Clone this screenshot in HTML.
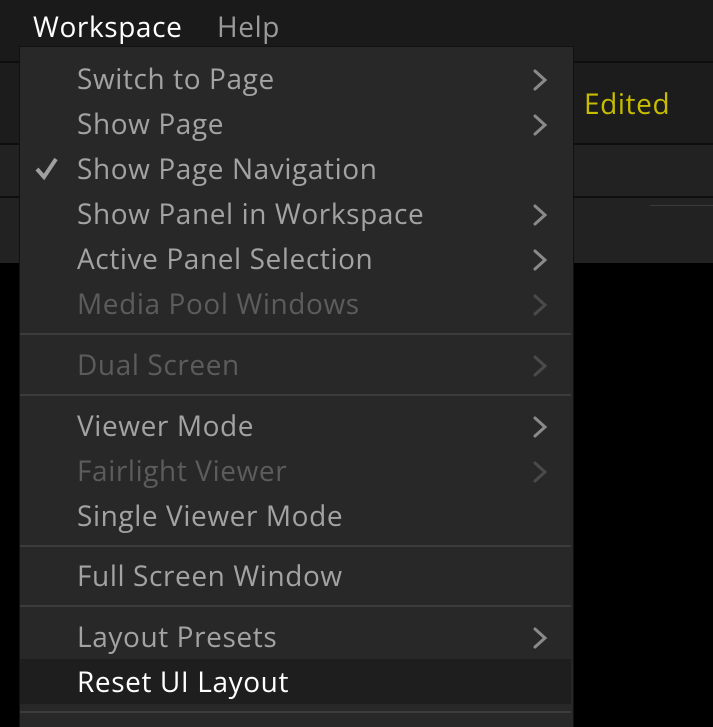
<!DOCTYPE html>
<html><head><style>
html,body{margin:0;padding:0;width:713px;height:726px;overflow:hidden;background:#000;font-family:"Open Sans","Liberation Sans",sans-serif;}
.abs{position:absolute;}
.t{position:absolute;left:77px;font-size:28px;color:#a3a3a3;white-space:nowrap;line-height:30px;letter-spacing:0.6px;}
.d{color:#5c5c5c;}
.sep{position:absolute;left:20px;width:551px;height:2px;background:#3c3c3c;}
</style></head><body>
<div class="abs" style="left:0;top:0;width:713px;height:61px;background:#1a1a1a"></div>
<div class="abs" style="left:0;top:61px;width:713px;height:2px;background:#0e0e0e"></div>
<div class="abs" style="left:0;top:63px;width:713px;height:80px;background:#1c1c1c"></div>
<div class="abs" style="left:0;top:143px;width:713px;height:2px;background:#0e0e0e"></div>
<div class="abs" style="left:0;top:145px;width:713px;height:51px;background:#222"></div>
<div class="abs" style="left:0;top:196px;width:713px;height:2px;background:#0e0e0e"></div>
<div class="abs" style="left:0;top:198px;width:713px;height:65px;background:#222"></div>
<div class="abs" style="left:650px;top:205px;width:63px;height:1px;background:#3a3a3a"></div>
<div class="t" style="left:33px;top:12px;color:#fff">Workspace</div>
<div class="t" style="left:217px;top:12px;color:#9a9a9a">Help</div>
<div class="t" style="left:584px;top:89px;color:#c6bd00">Edited</div>
<div class="abs" style="left:19px;top:46px;width:553px;height:680px;background:#282828;border:1px solid #111;border-bottom:none"></div>
<div class="abs" style="left:20px;top:659px;width:551px;height:45px;background:#1e1e1e"></div>
<svg class="abs" style="left:0;top:0" width="713" height="726">
<g fill="none" stroke="#8a8a8a" stroke-width="3" stroke-linecap="round">
<path d="M535 71l10 9-10 9"/><path d="M535 116l10 9-10 9"/><path d="M535 206l10 9-10 9"/><path d="M535 251l10 9-10 9"/>
<path d="M535 418l10 9-10 9"/><path d="M535 629l10 9-10 9"/>
</g>
<g fill="none" stroke="#4a4a4a" stroke-width="3" stroke-linecap="round">
<path d="M535 296l10 9-10 9"/><path d="M535 357l10 9-10 9"/><path d="M535 463l10 9-10 9"/>
</g>
<path d="M37 169l7 8 12-18" fill="none" stroke="#a0a0a0" stroke-width="4"/>
</svg>
<div class="t" style="top:64px">Switch to Page</div>
<div class="t" style="top:109px">Show Page</div>
<div class="t" style="top:154px">Show Page Navigation</div>
<div class="t" style="top:199px">Show Panel in Workspace</div>
<div class="t" style="top:244px">Active Panel Selection</div>
<div class="t d" style="top:289px">Media Pool Windows</div>
<div class="sep" style="top:333px"></div>
<div class="t d" style="top:350px">Dual Screen</div>
<div class="sep" style="top:394px"></div>
<div class="t" style="top:411px">Viewer Mode</div>
<div class="t d" style="top:456px">Fairlight Viewer</div>
<div class="t" style="top:501px">Single Viewer Mode</div>
<div class="sep" style="top:545px"></div>
<div class="t" style="top:561px">Full Screen Window</div>
<div class="sep" style="top:605px"></div>
<div class="t" style="top:622px">Layout Presets</div>
<div class="t" style="top:667px;color:#fff">Reset UI Layout</div>
<div class="sep" style="top:711px"></div>
</body></html>
